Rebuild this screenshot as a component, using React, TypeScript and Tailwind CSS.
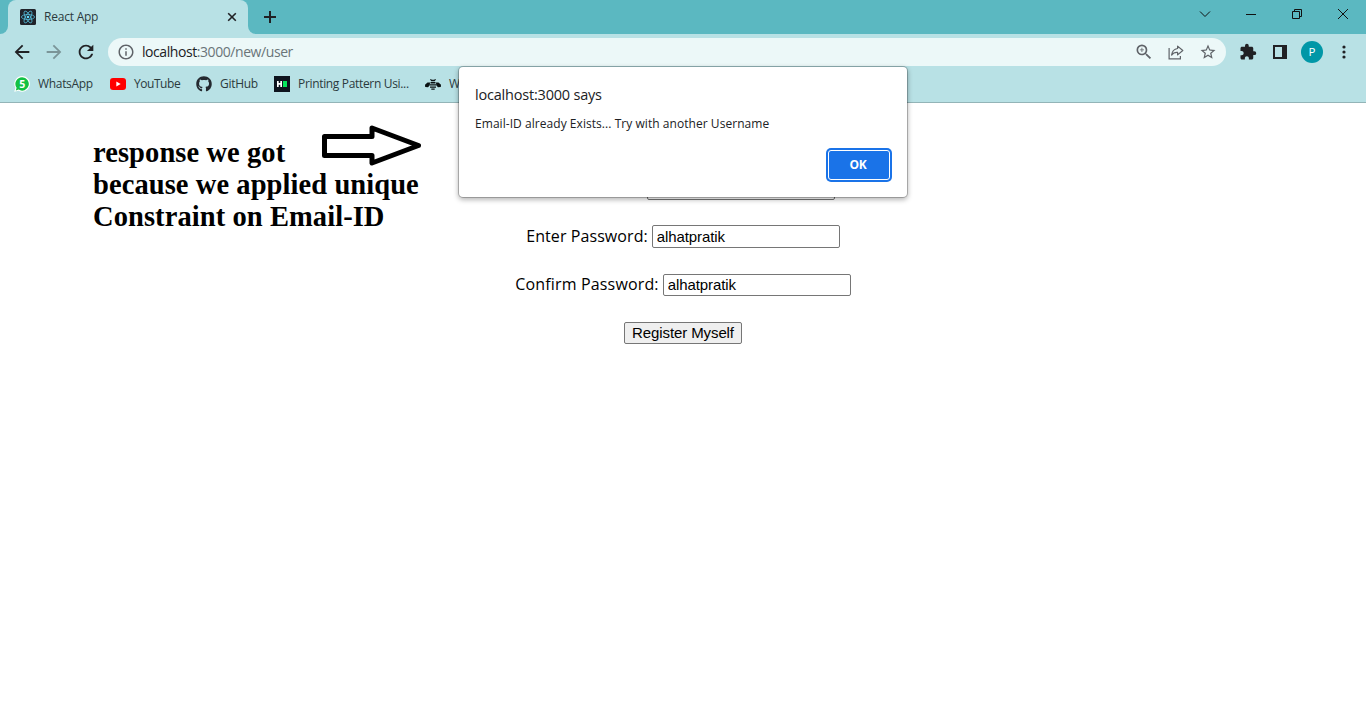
import type { ReactNode } from "react";
import {
  MdArrowBack,
  MdArrowForward,
  MdRefresh,
  MdInfoOutline,
  MdZoomIn,
  MdStarBorder,
  MdExtension,
} from "react-icons/md";
import { FaGithub } from "react-icons/fa";

function ReactIcon() {
  return (
    <svg width="16" height="16" viewBox="0 0 16 16" className="shrink-0">
      <rect width="16" height="16" rx="1.5" fill="#20232a" />
      <g fill="none" stroke="#53b9d6" strokeWidth="0.8">
        <ellipse cx="8" cy="8" rx="6.6" ry="2.5" />
        <ellipse cx="8" cy="8" rx="6.6" ry="2.5" transform="rotate(60 8 8)" />
        <ellipse cx="8" cy="8" rx="6.6" ry="2.5" transform="rotate(120 8 8)" />
      </g>
      <circle cx="8" cy="8" r="1.3" fill="#61dafb" />
    </svg>
  );
}

function WindowControls() {
  return (
    <div className="ml-auto flex h-7 items-center text-[#111]">
      <div className="flex w-[46px] justify-center">
        <svg width="12" height="8" viewBox="0 0 12 8" fill="none" stroke="currentColor">
          <path d="M1 1.5 6 6.5 11 1.5" />
        </svg>
      </div>
      <div className="flex w-[46px] justify-center">
        <svg width="10" height="10" viewBox="0 0 10 10">
          <path d="M0 5h10v1H0z" fill="currentColor" />
        </svg>
      </div>
      <div className="flex w-[46px] justify-center">
        <svg width="10" height="10" viewBox="0 0 10 10" fill="none" stroke="currentColor">
          <path d="M.5 2.5h7v7h-7zM2.5 2.5v-2h7v7h-2" />
        </svg>
      </div>
      <div className="flex w-[46px] justify-center">
        <svg width="10" height="10" viewBox="0 0 10 10" stroke="currentColor">
          <path d="M0 0 10 10M10 0 0 10" />
        </svg>
      </div>
    </div>
  );
}

function TabStrip() {
  return (
    <div className="flex h-[34px] bg-[#5bb8c1]">
      <div className="flex w-2 items-end bg-[#b8e1e5]">
        <div className="h-full w-2 rounded-br-lg bg-[#5bb8c1]" />
      </div>
      <div className="flex h-[34px] w-60 items-center rounded-t-lg bg-[#b8e1e5] pr-[11px] pl-3">
        <ReactIcon />
        <span className="ml-2 text-xs tracking-[-0.22px] text-[#2b3a3d]">React App</span>
        <svg width="10" height="10" viewBox="0 0 10 10" stroke="#202124" strokeWidth="1.6" className="ml-auto">
          <path d="M1.2 1.2 8.8 8.8M8.8 1.2 1.2 8.8" />
        </svg>
      </div>
      <div className="flex w-2 flex-col justify-end">
        <div className="h-2 w-2 bg-[#b8e1e5]">
          <div className="h-2 w-2 rounded-bl-lg bg-[#5bb8c1]" />
        </div>
      </div>
      <svg width="12" height="12" viewBox="0 0 12 12" stroke="#202124" strokeWidth="2" className="mt-[11px] ml-2">
        <path d="M6 0v12M0 6h12" />
      </svg>
      <WindowControls />
    </div>
  );
}

function Toolbar() {
  return (
    <div className="flex h-9 items-center bg-[#b8e1e5] text-[#202124]">
      <MdArrowBack size={22} className="ml-[11px] shrink-0" />
      <MdArrowForward size={22} className="ml-[10px] shrink-0 text-[#7b9598]" />
      <MdRefresh size={22} className="ml-[10px] shrink-0" />
      <div className="ml-[11px] flex h-7 w-[1118px] shrink-0 items-center rounded-full bg-[#ecf8f8] pl-[9px] text-[#5f6368]">
        <MdInfoOutline size={18} className="shrink-0" />
        <span className="ml-[7px] text-sm tracking-[-0.43px] text-[#6a7478]">
          <span className="text-[#202124]">localhost</span>:3000/new/user
        </span>
        <MdZoomIn size={20} className="ml-auto" />
        <svg width="16" height="15" viewBox="0 0 16 15" fill="none" stroke="currentColor" strokeWidth="1.2" className="ml-[14px]">
          <path d="M1.1 3v10.9h11.3v-3" />
          <path d="M9.6 1.1 14.8 5.5 9.6 9.9V7.4C6.8 7.2 5 8 3.6 10.1 4 6.600 6 4 9.600 3.500Z" strokeLinejoin="round" />
        </svg>
        <MdStarBorder size={18} className="mr-[9px] ml-[15px]" />
      </div>
      <MdExtension size={18} className="ml-[13px] shrink-0" />
      <svg width="14" height="14" viewBox="0 0 14 14" className="ml-4 shrink-0">
        <path d="M0 0h14v14H0zM2 2v10h7V2z" fill="currentColor" fillRule="evenodd" />
      </svg>
      <div className="ml-3.5 flex size-[22px] shrink-0 items-center justify-center rounded-full bg-[#0097a7] text-[11.500px] font-medium text-white">
        P
      </div>
      <svg width="4" height="14" viewBox="0 0 4 14" fill="currentColor" className="ml-[19px] shrink-0">
        <circle cx="2" cy="2" r="1.6" />
        <circle cx="2" cy="7" r="1.6" />
        <circle cx="2" cy="12" r="1.6" />
      </svg>
    </div>
  );
}

function Bookmark({ icon, label, className }: { icon: ReactNode; label: string; className: string }) {
  return (
    <div className={`flex shrink-0 items-center ${className}`}>
      {icon}
      <span className="ml-2 whitespace-nowrap">{label}</span>
    </div>
  );
}

function BookmarksBar() {
  return (
    <div className="flex h-[33px] items-center border-b border-[#93b4b7] bg-[#b8e1e5] pb-1 pl-3.5 text-xs text-[#2b3a3d]">
      <Bookmark
        className="w-24 tracking-[-0.32px]"
        label="WhatsApp"
        icon={
          <svg width="16" height="16" viewBox="0 0 16 16" className="shrink-0">
            <path d="M8.200 0a7.800 7.800 0 1 1-3.700 14.700L.2 15.800l1.200-4.100A7.800 7.800 0 0 1 8.200 0Z" fill="#fff" />
            <path d="M8.200 1.200a6.700 6.700 0 1 1-3.600 12.400l-2.800.8.8-2.700A6.700 6.700 0 0 1 8.200 1.200Z" fill="#12c143" />
            <text x="8" y="11.700" textAnchor="middle" fontSize="10.500" fontWeight="700" fill="#fff">5</text>
          </svg>
        }
      />
      <Bookmark
        className="w-[86px] tracking-[-0.45px]"
        label="YouTube"
        icon={
          <svg width="16" height="12" viewBox="0 0 16 12" className="shrink-0">
            <rect width="16" height="12" rx="3" fill="#f00" />
            <path d="M6.300 3.500v5L10.700 6z" fill="#fff" />
          </svg>
        }
      />
      <Bookmark
        className="w-[78px] tracking-[-0.28px]"
        label="GitHub"
        icon={<FaGithub size={16} className="shrink-0 text-[#24292f]" />}
      />
      <Bookmark
        className="w-[151px] tracking-[-0.33px]"
        label="Printing Pattern Usi..."
        icon={
          <svg width="16" height="16" viewBox="0 0 16 16" className="shrink-0">
            <path d="M0 0h16v16H0z" fill="#0e141e" />
            <path d="M3 5h1.700v2.100h1.600V5H8v6H6.300V8.700H4.700V11H3z" fill="#fff" />
            <path d="M9 5h4v6H9z" fill="#05e55b" />
          </svg>
        }
      />
      <Bookmark
        className="w-40"
        label="W"
        icon={
          <svg width="16" height="11" viewBox="0 0 16 11" className="shrink-0" fill="#0a1214">
            <path d="M5 3.500 2.500 3.500 0 5.800.2 8 3 8.200 4.800 6.200zM11 3.500l2.500 0L16 5.800l-.2 2.200-2.800.2-1.800-2z" />
            <path d="M5.500 0 7 .800h2L10.500 0l.4.600L9.800 2.200H6.200L5.100.600z" />
            <path d="M5.500 3h5v1.400h-5zM5 5.200h6v1.400H5zM5 7.400h6v1.400H5zM6.300 9.600h3.400v1.200H6.300z" />
          </svg>
        }
      />
    </div>
  );
}

function AlertDialog() {
  return (
    <div
      role="alertdialog"
      className="absolute top-[67px] left-[459px] flex h-[130px] w-[448px] flex-col rounded-[4px] bg-white px-4 text-[#202124] shadow-[0_0_0_1px_rgba(0,0,0,0.22),0_2px_5px_1px_rgba(0,0,0,0.28)]"
    >
      <h1 className="mt-[18px] text-[14.500px] leading-5 tracking-[-0.2px]">localhost:3000 says</h1>
      <p className="mt-[11px] text-xs leading-4 tracking-[0.05px]">
        Email-ID already Exists... Try with another Username
      </p>
      <button className="mt-[18px] mr-px flex h-[30px] w-[62px] items-center justify-center self-end rounded-[3px] border border-white bg-[#1a73e8] pr-0.5 text-xs font-bold tracking-[-0.3px] text-white ring-2 ring-[#1a73e8]">
        OK
      </button>
    </div>
  );
}

const fieldClass =
  "h-full w-[188px] rounded-[2px] border border-[#767676] bg-white px-1 font-['Liberation_Sans',sans-serif] text-[15px] tracking-[-0.1px] text-black outline-none";

function Page() {
  return (
    <main className="flex grow bg-white text-black">
      <div className="w-[459px] shrink-0 pl-[93px]">
        <div className="flex h-[105px] items-start">
          <h2 className="mt-[34px] -mr-[97px] w-[326px] shrink-0 font-['Liberation_Serif',serif] text-[28.500px] leading-8 font-bold tracking-[0.08px] whitespace-nowrap">
            response we got
            <br />
            because we applied unique
            <br />
            Constraint on Email-ID
          </h2>
          <svg width="100" height="42" viewBox="0 0 100 42" fill="none" stroke="#000" strokeWidth="5" strokeLinejoin="round" className="mt-[22px] shrink-0">
            <path d="M2.500 11.500H50V3L96.500 20.500 50 38V30.500H2.500Z" />
          </svg>
        </div>
      </div>
      <form className="flex w-[448px] flex-col items-center pt-[74px]">
        <div className="flex h-[23px] w-full pl-[188px]">
          <input className={fieldClass} readOnly aria-label="Email" />
        </div>
        <label className="mt-[25px] flex h-[23px] items-center gap-[4px] text-base tracking-[0.08px]">
          <span className="pb-0.5">Enter Password:</span>
          <input className={fieldClass} readOnly value="alhatpratik" />
        </label>
        <label className="mt-[26px] flex h-[22px] items-center gap-[4px] text-base tracking-[0.16px]">
          <span className="pb-0.5">Confirm Password:</span>
          <input className={`${fieldClass} pb-0.5`} readOnly value="alhatpratik" />
        </label>
        <button
          type="button"
          className="mt-[26px] h-[22px] w-[118px] rounded-[2px] border border-[#767676] bg-[#efefef] font-['Liberation_Sans',sans-serif] text-[15px] leading-5 tracking-[-0.1px]"
        >
          Register Myself
        </button>
      </form>
    </main>
  );
}

export default function App() {
  return (
    <div className="relative flex h-[714px] w-[1366px] flex-col overflow-hidden bg-white font-['Open_Sans',sans-serif]">
      <TabStrip />
      <Toolbar />
      <BookmarksBar />
      <Page />
      <AlertDialog />
    </div>
  );
}
